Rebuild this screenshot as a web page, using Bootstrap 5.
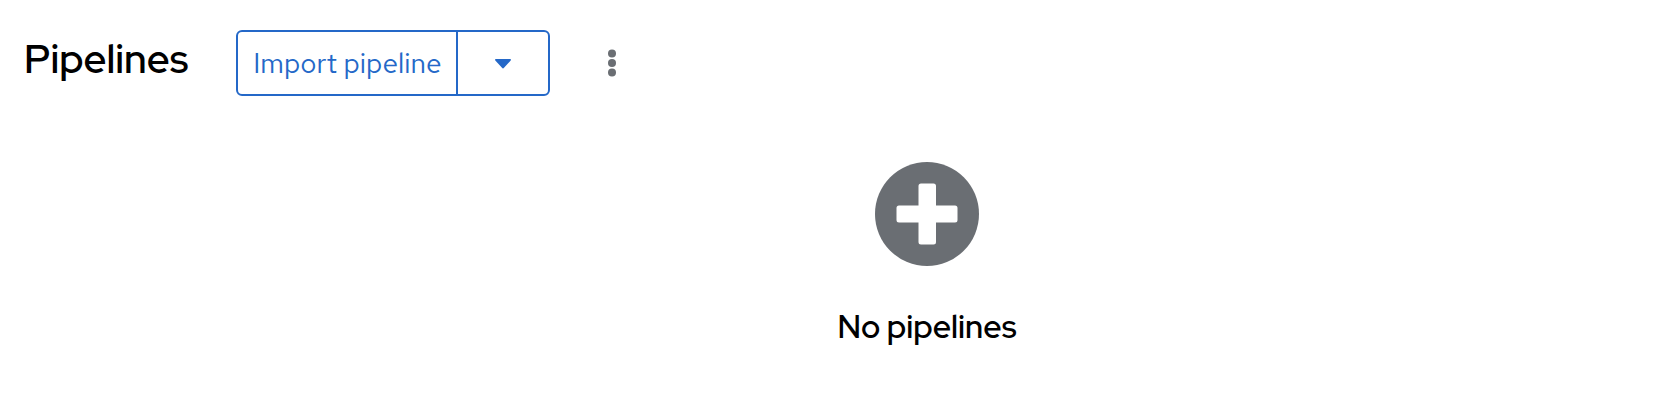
<!DOCTYPE html>
<html lang="en">
<head>
<meta charset="utf-8">
<meta name="viewport" content="width=device-width, initial-scale=1">
<title>Pipelines</title>
<link href="https://cdn.jsdelivr.net/npm/bootstrap@5.3.0/dist/css/bootstrap.min.css" rel="stylesheet">
<style>
  body { font-family: "Red Hat Text", Lato, sans-serif; color: #000; background: #fff; }
  .page-title, .empty-title { font-family: "Red Hat Display", "Red Hat Text", Lato, sans-serif; font-weight: 600; }
  .page-head { padding: 30px 24px 0; }
  .page-title { font-size: 40px; line-height: 58px; min-width: 164px; margin-right: 48px; }
  .split-btn { --bs-border-width: 2px; }
  .split-btn .btn {
    --bs-btn-color: #2468c8; --bs-btn-border-color: #2468c8;
    --bs-btn-hover-bg: #2468c8; --bs-btn-active-bg: #1a4f9c;
    --bs-btn-border-width: 2px; --bs-btn-border-radius: 6px;
    --bs-btn-font-size: 28px; --bs-btn-line-height: 42px;
    --bs-btn-padding-x: 12px; --bs-btn-padding-y: 10px;
    min-width: 222px;
  }
  .split-btn .btn + .btn { min-width: 94px; }
  .kebab { color: #6a6e73; margin-left: 40px; width: 44px; height: 66px; }
  .empty-state { padding: 66px 0 0 184px; color: #000; }
  .empty-icon { color: #6a6e73; }
  .empty-title { font-size: 32px; line-height: 42px; margin-top: 40px; }
</style>
</head>
<body>
<header class="page-head d-flex align-items-start">
  <h1 class="page-title mb-0">Pipelines</h1>
  <div class="btn-group split-btn">
    <button type="button" class="btn btn-outline-primary">Import pipeline</button>
    <button type="button" class="btn btn-outline-primary d-flex align-items-center justify-content-center" aria-label="More import options">
      <svg width="16" height="12" viewBox="0 -2 16 12" fill="currentColor" aria-hidden="true"><path d="M.8 0h14.4q1.2.3.5 1.4L9 8.800Q8 10 7 8.800L.3 1.400Q-.4.300.8 0z"/></svg>
    </button>
  </div>
  <button type="button" class="btn kebab border-0 p-0 d-flex align-items-center justify-content-center" aria-label="Pipeline actions">
    <svg width="8" height="28" viewBox="0 0 8 28" fill="currentColor" aria-hidden="true"><circle cx="4" cy="4.400" r="4"/><circle cx="4" cy="14" r="4"/><circle cx="4" cy="23.600" r="4"/></svg>
  </button>
</header>
<main class="empty-state d-flex flex-column align-items-center text-center">
  <svg class="empty-icon" width="104" height="104" viewBox="0 0 104 104" aria-hidden="true">
    <circle cx="52" cy="52" r="52" fill="currentColor"/>
    <path fill="#fff" d="M46 21.500h12.500q2.500 0 2.500 2.500v19.500h19q2.500 0 2.500 2.500v12q0 2.500-2.500 2.500H61V80q0 2.500-2.500 2.500H46q-2.500 0-2.500-2.500V60.500H24q-2.500 0-2.500-2.500V46q0-2.500 2.500-2.500h19.500V24q0-2.500 2.500-2.500z"/>
  </svg>
  <h2 class="empty-title mb-0">No pipelines</h2>
</main>
<script src="https://cdn.jsdelivr.net/npm/bootstrap@5.3.0/dist/js/bootstrap.bundle.min.js"></script>
</body>
</html>
